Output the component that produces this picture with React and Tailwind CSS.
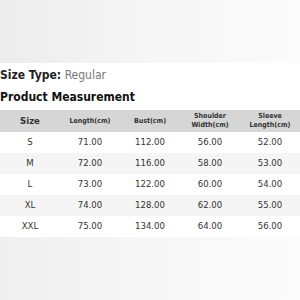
export default function App() {
  const rows = [
    ["S", "71.00", "112.00", "56.00", "52.00"],
    ["M", "72.00", "116.00", "58.00", "53.00"],
    ["L", "73.00", "122.00", "60.00", "54.00"],
    ["XL", "74.00", "128.00", "62.00", "55.00"],
    ["XXL", "75.00", "134.00", "64.00", "56.00"],
  ];

  return (
    <div className="w-[300px] h-[300px] overflow-hidden bg-white font-['DejaVu_Sans_Condensed','DejaVu_Sans',sans-serif] font-stretch-condensed">
      {/* photo backdrop top */}
      <div className="h-[63px] bg-gradient-to-r from-[#ececec] via-[#f6f6f6] to-[#fbfbfb]"></div>

      <div className="bg-white">
        <p className="h-[22px] pt-[3px] text-[12px] leading-[18px] text-[#222]">
          <span className="font-bold">Size Type:</span>{" "}
          <span className="text-[#777]">Regular</span>
        </p>
        <p className="h-[25px] pt-[3px] text-[12px] leading-[18px] font-bold text-[#111]">
          Product Measurement
        </p>

        {/* Table */}
        <div className="grid grid-cols-5 h-[22px] bg-[#d6d6d6] text-[#333] items-center text-center font-bold">
          <span className="text-[9.5px]">Size</span>
          <span className="text-[7px]">Length(cm)</span>
          <span className="text-[7px]">Bust(cm)</span>
          <span className="text-[7px] leading-[9px]">
            Shoulder
            <br />
            Width(cm)
          </span>
          <span className="text-[7px] leading-[9px]">
            Sleeve
            <br />
            Length(cm)
          </span>
        </div>
        {rows.map((r, i) => (
          <div
            key={r[0]}
            className={`grid grid-cols-5 h-[21px] items-center text-center text-[9.5px] text-[#333] ${
              i % 2 === 1 ? "bg-[#f5f5f5]" : "bg-white"
            }`}
          >
            {r.map((c, j) => (
              <span key={j}>{c}</span>
            ))}
          </div>
        ))}
      </div>

      {/* photo backdrop bottom */}
      <div className="h-[63px] bg-gradient-to-r from-[#efefef] via-[#f7f7f7] to-[#fbfbfb]"></div>
    </div>
  );
}
